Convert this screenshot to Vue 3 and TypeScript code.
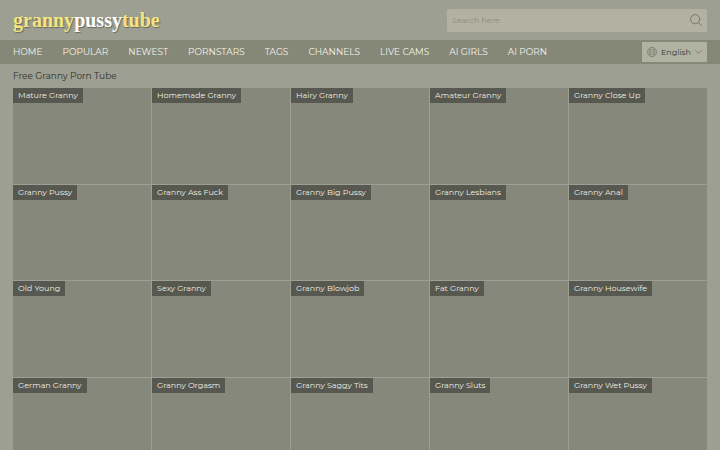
<script setup lang="ts">
import { ref } from 'vue'

const query = ref('')
const language = ref('English')

const navItems: string[] = [
  'HOME', 'POPULAR', 'NEWEST', 'PORNSTARS', 'TAGS',
  'CHANNELS', 'LIVE CAMS', 'AI GIRLS', 'AI PORN',
]

const categories: string[] = [
  'Mature Granny', 'Homemade Granny', 'Hairy Granny', 'Amateur Granny', 'Granny Close Up',
  'Granny Pussy', 'Granny Ass Fuck', 'Granny Big Pussy', 'Granny Lesbians', 'Granny Anal',
  'Old Young', 'Sexy Granny', 'Granny Blowjob', 'Fat Granny', 'Granny Housewife',
  'German Granny', 'Granny Orgasm', 'Granny Saggy Tits', 'Granny Sluts', 'Granny Wet Pussy',
]
</script>

<template>
  <div class="page">
    <header class="top">
      <a class="logo" href="#">granny<span class="logo-mid">pussy</span>tube</a>
      <form class="search" role="search" @submit.prevent>
        <input v-model="query" class="search-input" type="text" placeholder="Search here" aria-label="Search here" />
        <button class="search-button" type="submit" aria-label="Search">
          <svg viewBox="0 0 12 12" width="12" height="12" fill="none" stroke="currentColor" stroke-linecap="round">
            <circle cx="5.2" cy="5.2" r="4.6" />
            <path d="M8.5 8.5 11.4 11.4" />
          </svg>
        </button>
      </form>
    </header>

    <div class="bar">
      <nav class="nav">
        <a v-for="item in navItems" :key="item" class="nav-link" href="#">{{ item }}</a>
      </nav>
      <label class="language">
        <svg class="globe" viewBox="0 0 10 10" width="10" height="10" fill="none" stroke="currentColor" stroke-width=".6">
          <circle cx="5" cy="5" r="4.6" />
          <ellipse cx="5" cy="5" rx="2.2" ry="4.6" />
          <path d="M.4 5h9.2M1.1 2.8h7.8M1.1 7.2h7.8" />
        </svg>
        <select v-model="language" class="language-select" aria-label="Language">
          <option>English</option>
        </select>
        <svg class="chevron" viewBox="0 0 7 4" width="7" height="4" fill="none" stroke="currentColor" stroke-width=".8">
          <path d="M.4.5 3.5 3.4 6.6.5" />
        </svg>
      </label>
    </div>

    <main class="content">
      <h1 class="title">Free Granny Porn Tube</h1>
      <div class="grid">
        <a v-for="category in categories" :key="category" class="tile" href="#">
          <span class="tag">{{ category }}</span>
        </a>
      </div>
    </main>
  </div>
</template>

<style>
body {
  margin: 0;
  background: #9d9f92;
}
</style>

<style scoped>
.page {
  height: 100vh;
  overflow: hidden;
  background: #9d9f92;
  color: #383932;
  font-family: Montserrat, Inter, sans-serif;
  font-size: 8px;
}

a {
  color: inherit;
  text-decoration: none;
}

.top {
  display: flex;
  align-items: center;
  justify-content: space-between;
  height: 40px;
  padding: 0 13px;
}

.logo {
  color: #f3e582;
  font-family: "Liberation Serif", serif;
  font-size: 20px;
  font-weight: 700;
  line-height: 24px;
  text-shadow: 1px 1px 1px #68695c;
}

.logo-mid {
  color: #fff;
}

.search {
  display: flex;
  align-items: center;
  box-sizing: border-box;
  width: 260px;
  height: 23px;
  border-radius: 2px;
  background: #b1b2a1;
}

.search-input {
  flex: 1;
  min-width: 0;
  height: 100%;
  padding: 0 5px;
  border: 0;
  outline: 0;
  background: transparent;
  color: #383932;
  font: inherit;
}

.search-input::placeholder {
  color: #8b8d7f;
  opacity: 1;
}

.search-button {
  display: flex;
  padding: 0 5px;
  border: 0;
  background: transparent;
  color: #77796b;
}

.bar {
  display: flex;
  align-items: center;
  justify-content: space-between;
  height: 24px;
  padding: 0 13px;
  background: #858777;
}

.nav {
  display: flex;
  gap: 20px;
}

.nav-link {
  color: #f2f2ea;
  font-size: 9px;
  line-height: 24px;
  white-space: nowrap;
}

.language {
  display: flex;
  align-items: center;
  gap: 4px;
  height: 20px;
  padding: 0 5px;
  background: #b1b2a1;
  color: #77796b;
}

.language-select {
  appearance: none;
  padding: 0;
  border: 0;
  outline: 0;
  background: transparent;
  color: #383932;
  font: inherit;
}

.content {
  padding: 0 13px;
}

.title {
  margin: 0;
  color: #30312b;
  font-size: 9px;
  font-weight: 400;
  line-height: 23px;
}

.grid {
  display: grid;
  grid-template-columns: repeat(5, 1fr);
  gap: 1px;
  padding-top: 1px;
  background: #9d9f92;
}

.tile {
  aspect-ratio: 276 / 191;
  background: #86887b;
}

.tag {
  display: inline-block;
  padding: 0 5px;
  background: #57584f;
  color: #f0f0e8;
  line-height: 15px;
  white-space: nowrap;
  vertical-align: top;
}
</style>
